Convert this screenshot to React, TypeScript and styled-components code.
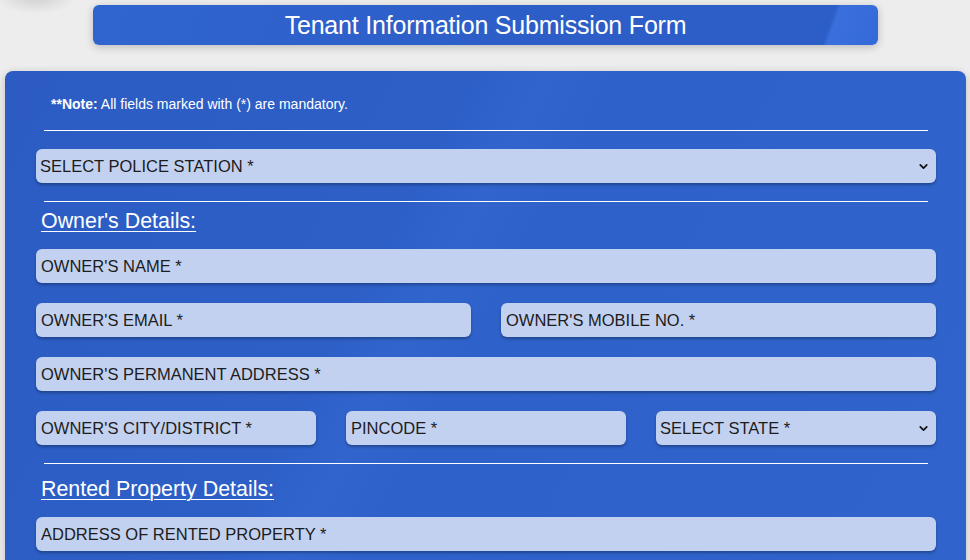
import React from 'react';
import styled, { createGlobalStyle } from 'styled-components';
import { ChevronDown } from 'lucide-react';

const GlobalStyle = createGlobalStyle`
  html, body {
    margin: 0;
    padding: 0;
  }
  body {
    background:
      radial-gradient(ellipse 42px 18px at 36px -4px, rgba(0, 0, 0, 0.13), rgba(0, 0, 0, 0) 100%),
      #ededed;
    font-family: "Liberation Sans", Arial, sans-serif;
    overflow: hidden;
  }
`;

const Page = styled.div`
  padding: 5px 4px 0 5px;
`;

const Header = styled.div`
  width: 785px;
  height: 40px;
  margin: 0 auto;
  border-radius: 6px;
  background: linear-gradient(
    110deg,
    #3064cf 0%,
    #2d5ec8 55%,
    #2d5ec7 93%,
    #3a6fdd 93.6%,
    #3469d8 100%
  );
  box-shadow: 0 2px 8px rgba(0, 0, 0, 0.22);
  display: flex;
  align-items: center;
  justify-content: center;
`;

const Title = styled.h1`
  margin: 0;
  font-size: 25px;
  font-weight: 400;
  color: #ffffff;
  letter-spacing: -0.2px;
`;

const Panel = styled.div`
  margin-top: 26px;
  height: 520px;
  border-radius: 8px;
  padding: 20px 30px 0 31px;
  box-sizing: border-box;
  background: linear-gradient(
    118deg,
    #2c5cc3 0%,
    #2d5fc7 38%,
    #3165cd 44%,
    #2e61c9 50%,
    #3064cc 100%
  );
  box-shadow: 0 2px 8px rgba(0, 0, 0, 0.2);
`;

const Note = styled.p`
  margin: 0 0 0 15px;
  line-height: 26px;
  font-size: 14px;
  color: #ffffff;

  b {
    font-weight: 700;
  }
`;

const Divider = styled.hr<{ $top: number }>`
  border: 0;
  border-top: 1px solid #ffffff;
  height: 0;
  margin: ${(p) => p.$top}px 8px 18px;
`;

const SectionTitle = styled.h2<{ $top: number }>`
  margin: ${(p) => p.$top}px 0 16px 5px;
  font-size: 21.4px;
  line-height: 24px;
  font-weight: 400;
  color: #ffffff;
  text-decoration: underline;
  text-underline-offset: 3px;
  text-decoration-thickness: 1px;
`;

const Fields = styled.div`
  display: flex;
  flex-direction: column;
  gap: 20px;
`;

const Row = styled.div<{ $cols: number }>`
  display: grid;
  grid-template-columns: repeat(${(p) => p.$cols}, 1fr);
  column-gap: 30px;
`;

const fieldStyle = `
  width: 100%;
  height: 34px;
  box-sizing: border-box;
  border: none;
  border-radius: 6px;
  background: #c3d1f0;
  box-shadow: 0 2px 3px rgba(0, 0, 0, 0.28);
  font-family: "Liberation Sans", Arial, sans-serif;
  font-size: 16.5px;
  color: #1c1c1c;
  outline: none;
`;

const Input = styled.input`
  ${fieldStyle}
  padding: 0 5px;

  &::placeholder {
    color: #1c1c1c;
    opacity: 1;
  }
`;

const SelectWrap = styled.div`
  position: relative;
`;

const Select = styled.select`
  ${fieldStyle}
  appearance: none;
  padding: 0 30px 0 4px;
`;

const Chevron = styled(ChevronDown)`
  position: absolute;
  right: 6px;
  top: 11px;
  pointer-events: none;
  color: #111111;
`;

const Dropdown = ({ label }: { label: string }) => (
  <SelectWrap>
    <Select defaultValue="">
      <option value="">{label}</option>
    </Select>
    <Chevron size={13} strokeWidth={3.2} />
  </SelectWrap>
);

export default function App() {
  return (
    <>
      <GlobalStyle />
      <Page>
        <Header>
          <Title>Tenant Information Submission Form</Title>
        </Header>
        <Panel>
          <Note>
            <b>**Note:</b> All fields marked with (*) are mandatory.
          </Note>
          <Divider $top={13} />
          <Dropdown label="SELECT POLICE STATION *" />
          <Divider $top={18} />

          <SectionTitle $top={-11}>Owner's Details:</SectionTitle>
          <Fields>
            <Input placeholder="OWNER'S NAME *" />
            <Row $cols={2}>
              <Input placeholder="OWNER'S EMAIL *" />
              <Input placeholder="OWNER'S MOBILE NO. *" />
            </Row>
            <Input placeholder="OWNER'S PERMANENT ADDRESS *" />
            <Row $cols={3}>
              <Input placeholder="OWNER'S CITY/DISTRICT *" />
              <Input placeholder="PINCODE *" />
              <Dropdown label="SELECT STATE *" />
            </Row>
          </Fields>
          <Divider $top={18} />

          <SectionTitle $top={-5}>Rented Property Details:</SectionTitle>
          <Fields>
            <Input placeholder="ADDRESS OF RENTED PROPERTY *" />
          </Fields>
        </Panel>
      </Page>
    </>
  );
}
